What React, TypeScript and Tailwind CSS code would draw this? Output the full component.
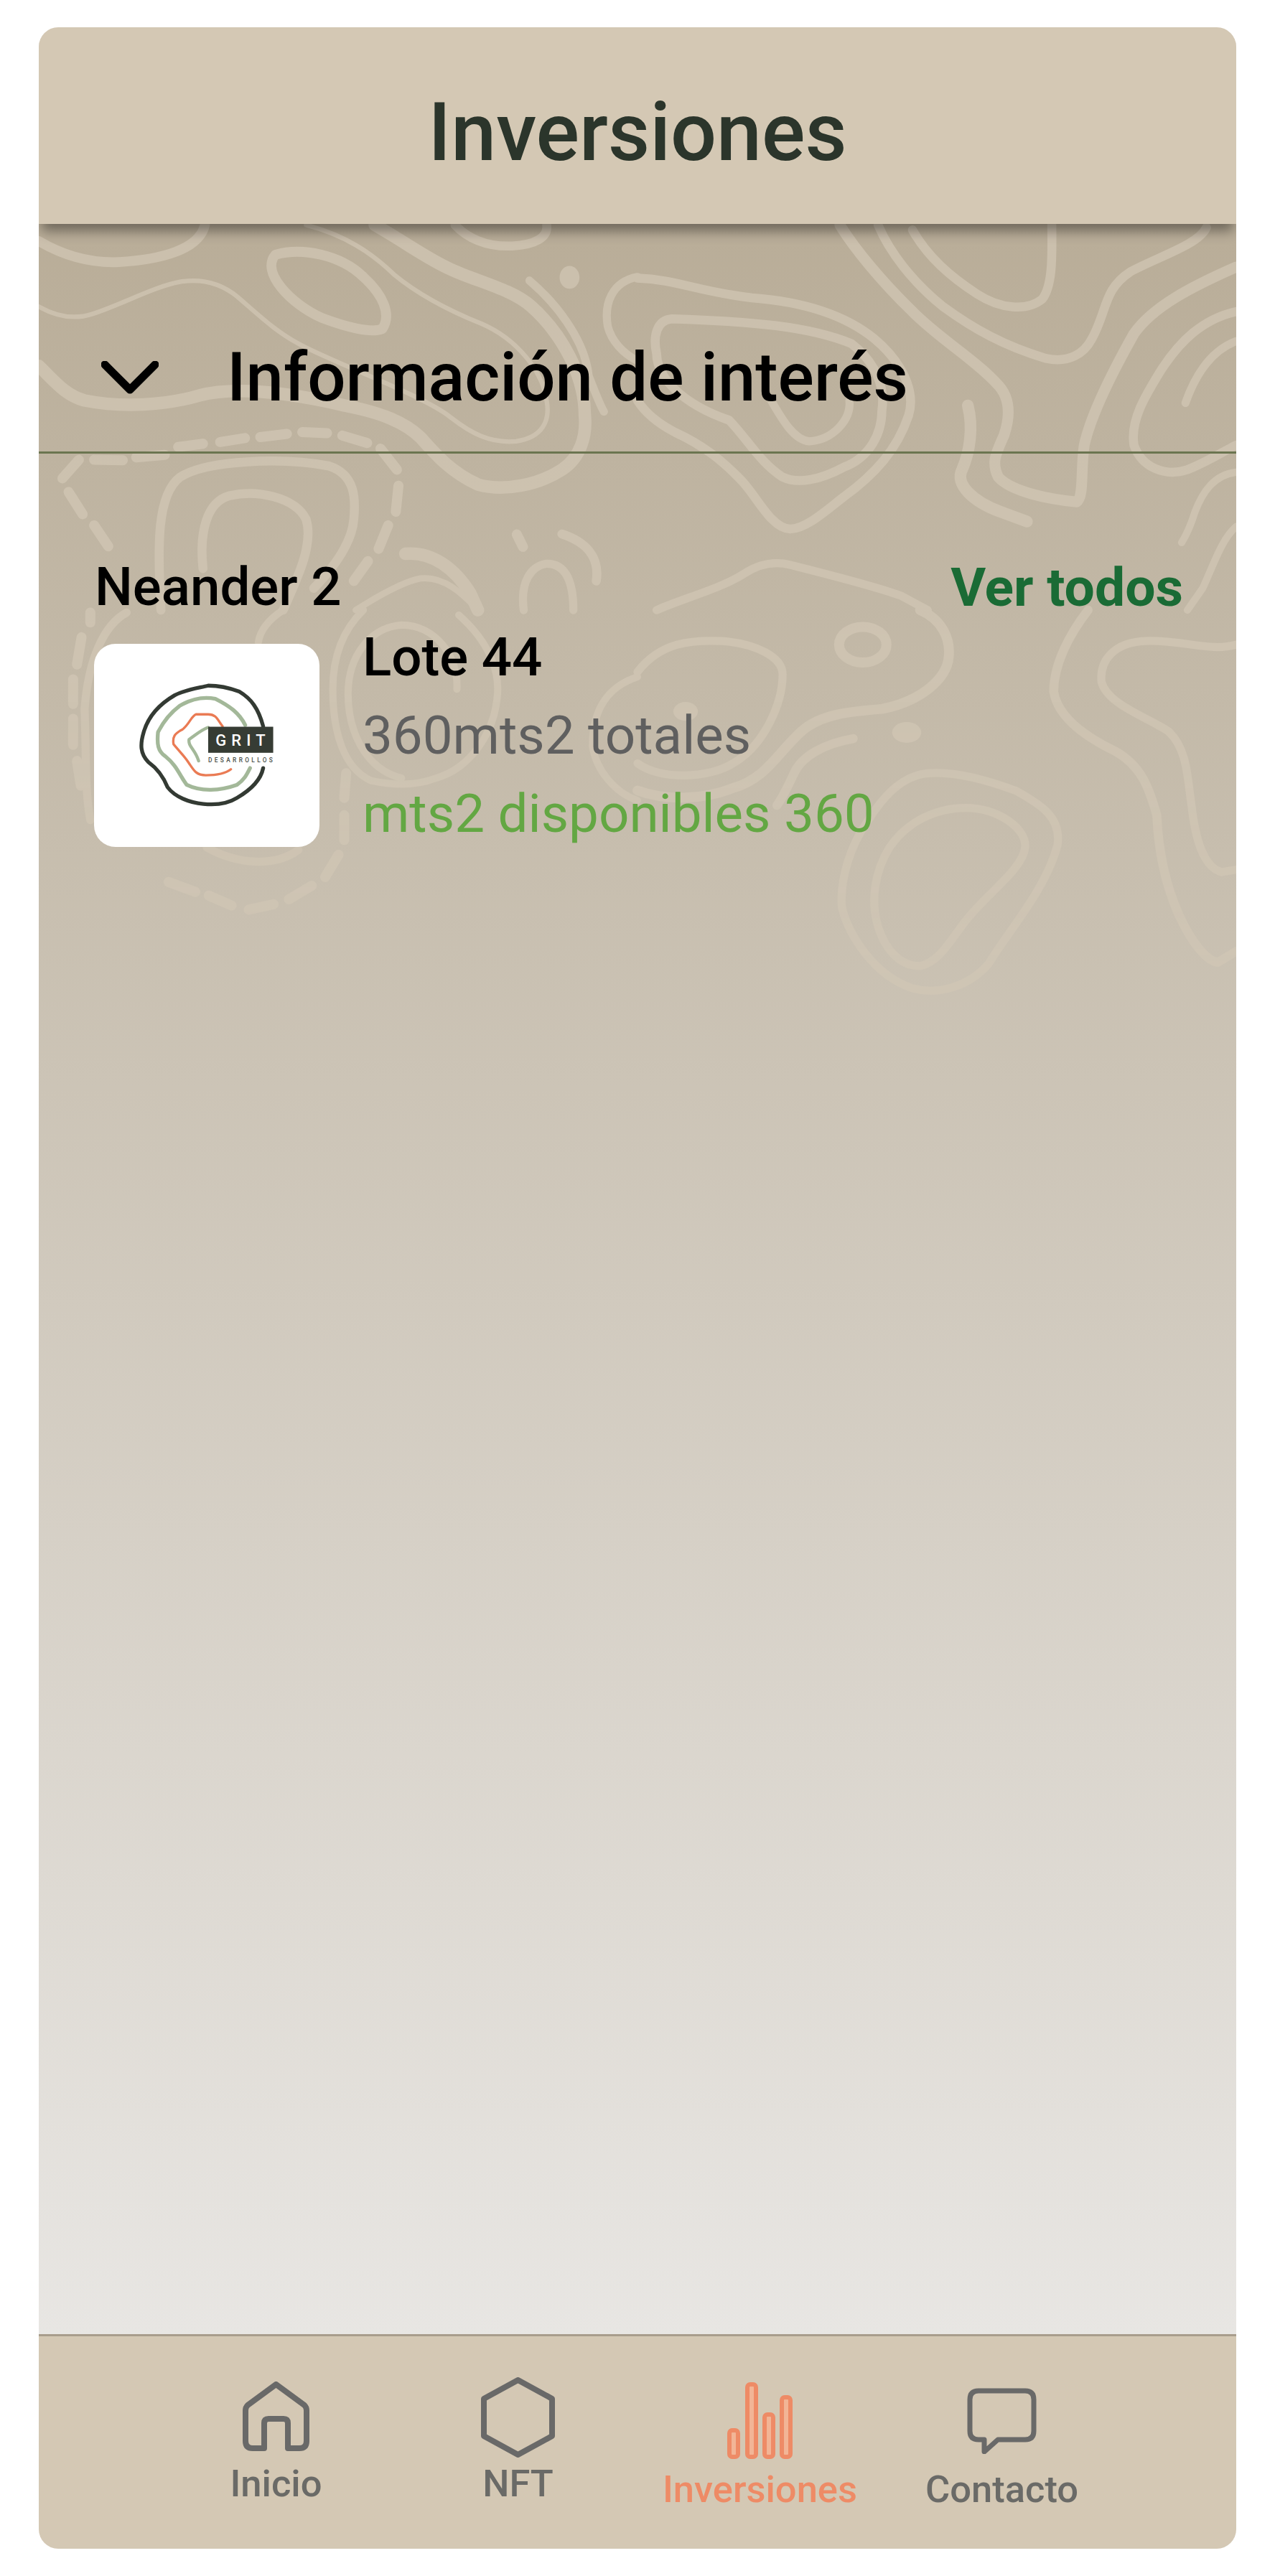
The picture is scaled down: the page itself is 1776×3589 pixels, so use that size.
const topLeft = [
  { d: "M0,75 C60,130 130,165 210,160 C320,150 420,110 435,10", w: 11 },
  { d: "M0,340 C40,375 90,395 140,370 C220,330 300,260 370,240 C430,225 480,250 520,300 C580,380 620,440 680,490 C760,560 1010,700 1080,790 C1130,850 1180,895 1250,885 C1320,870 1340,800 1330,720 C1320,600 1250,470 1160,410 C1080,360 1000,300 930,210 C870,120 800,50 700,10", w: 5 },
  { d: "M620,130 C690,100 790,130 850,220 C900,290 925,370 900,430 C870,450 800,420 740,385 C660,330 580,200 620,130 Z", w: 11 },
  { d: "M880,10 C960,80 1020,150 1080,190 C1150,240 1240,270 1290,340 C1370,450 1430,620 1430,780 C1435,860 1420,950 1370,1000 C1310,1060 1220,1090 1150,1060 C1080,1010 1040,940 1000,870 C960,810 900,770 800,740 C660,690 520,660 420,700 C330,740 220,750 120,720 C70,700 40,640 0,580", w: 14 },
  { d: "M1090,10 C1120,60 1170,100 1240,95 C1300,90 1335,60 1330,10", w: 10 },
  { d: "M320,1568 C310,1300 310,1100 370,1030 C440,960 640,950 760,985 C830,1020 830,1120 825,1200 C820,1300 770,1400 720,1480", w: 10 },
  { d: "M430,1400 C420,1250 440,1130 500,1105 C570,1080 670,1110 700,1200 C720,1300 680,1430 640,1568", w: 10 },
  { d: "M960,1340 C1030,1330 1090,1400 1130,1500 L1150,1568", w: 14 },
  { d: "M830,1568 C900,1500 960,1450 1000,1440 C1060,1430 1110,1500 1150,1568", w: 7 },
  { d: "M1370,1260 C1430,1290 1470,1350 1460,1450", w: 10 },
  { d: "M1270,1568 C1260,1450 1290,1390 1330,1380 C1380,1380 1400,1450 1400,1568", w: 9 },
  { d: "M1285,235 C1350,320 1430,470 1440,620 C1460,700 1470,740 1480,765", w: 9 },
  { d: "M1568,220 C1500,240 1480,330 1490,420 C1500,480 1530,530 1568,560", w: 9 },
];

const topRight = [
  { d: "M0,225 C100,230 160,280 300,305 C430,320 540,370 620,470 C690,560 730,680 710,780 C680,920 620,1020 540,1110 C490,1170 440,1240 400,1240 C350,1240 310,1100 270,1040 C220,960 170,900 100,850 C50,810 20,770 0,720", w: 10 },
  { d: "M640,760 C650,660 620,560 560,490 C450,420 300,400 90,390 C50,395 40,460 50,530 C50,620 110,730 240,800 C290,880 320,970 380,1030 C420,1060 480,1040 540,990 C610,950 640,850 640,760", w: 10 },
  { d: "M350,720 C380,800 410,880 450,885 C510,880 560,800 555,720", w: 9 },
  { d: "M530,10 C570,110 640,240 720,360 C790,470 880,550 940,650 C980,710 975,790 960,860 C940,930 925,970 945,1030 C980,1090 1080,1120 1150,1130 C1170,1110 1160,1000 1170,900 C1190,760 1260,560 1300,450 C1350,340 1450,260 1568,180", w: 12 },
  { d: "M630,10 C660,120 720,240 800,340 C880,430 960,500 1070,550 C1130,570 1170,530 1190,470 C1230,360 1220,270 1290,200 C1360,140 1470,90 1490,20", w: 10 },
  { d: "M720,30 C760,140 820,220 890,290 C950,350 1020,360 1060,310 C1090,250 1085,110 1085,10", w: 10 },
  { d: "M865,740 C880,830 870,930 850,1000 C830,1060 880,1130 950,1170 L1020,1210", w: 13 },
  { d: "M1568,360 C1480,390 1420,480 1370,600 C1330,700 1290,800 1300,900 C1320,990 1380,1030 1440,1000 C1490,970 1530,930 1568,900", w: 10 },
  { d: "M1435,730 C1460,620 1500,520 1568,480", w: 9 },
  { d: "M1568,1010 C1510,1020 1480,1090 1460,1170 C1450,1220 1435,1270 1425,1295", w: 8 },
  { d: "M1568,1230 C1530,1280 1510,1380 1480,1480 L1440,1568", w: 8 },
  { d: "M50,1568 C120,1520 220,1480 280,1420 C320,1380 360,1370 400,1385 C490,1420 620,1470 690,1510 L760,1568", w: 9 },
];

const bottomLeft = [
  { d: "M230,10 C170,60 130,200 120,400 C125,600 120,720 135,850", w: 9 },
  { d: "M440,960 C520,1030 620,1040 680,970", w: 9 },
  { d: "M950,680 C850,640 810,480 810,340 C810,180 870,70 950,60 C1040,60 1100,190 1095,320", w: 8 },
  { d: "M1100,20 C1180,130 1210,250 1200,360 C1190,500 1130,640 1040,680 C990,710 930,710 870,690 C800,640 770,500 770,320 C770,160 810,60 850,0", w: 8 },
  { d: "M640,0 C600,40 580,80 575,130", w: 8 },
  { d: "M1568,270 C1490,310 1450,400 1450,550 C1460,650 1510,740 1568,770", w: 8 },
];

const bottomRight = [
  { d: "M0,250 C60,130 140,120 220,125 C310,135 380,190 380,260 C380,380 330,550 250,620 C190,680 60,690 0,620", w: 9 },
  { d: "M740,0 C800,40 820,120 815,190 C810,280 740,370 640,400 C560,410 480,420 430,490 C370,570 340,680 250,720 C170,770 70,770 0,730", w: 11 },
  { d: "M565,520 C490,540 430,590 410,660 C395,710 380,760 365,790", w: 10 },
  { d: "M760,660 C690,670 640,760 600,860 C560,950 530,1080 535,1200 C550,1310 620,1480 720,1530 C790,1560 870,1520 920,1430 C970,1300 1070,1130 1100,950 C1110,840 1060,790 990,730 C920,690 830,650 760,660 Z", w: 9 },
  { d: "M860,800 C770,800 700,870 660,960 C620,1060 610,1180 630,1280 C650,1380 690,1440 740,1440 C800,1420 830,1300 880,1220 C930,1130 1010,1040 1015,960 C1020,880 940,800 860,800 Z", w: 9 },
  { d: "M1180,0 C1130,100 1090,220 1090,330 C1100,430 1170,510 1250,570 C1320,630 1340,720 1360,830 C1365,1000 1390,1140 1420,1240 C1450,1340 1490,1420 1520,1425 L1568,1380", w: 10 },
  { d: "M1568,140 C1500,170 1430,120 1330,125 C1250,130 1210,200 1215,290 C1230,380 1330,430 1390,490 C1440,560 1440,680 1450,780 C1460,920 1480,1040 1530,1060 L1568,1050", w: 9 },
];

// dashed ring around the logo, short strokes
const dashesTop = [
  "M145,960 L220,962", "M255,950 L330,940", "M365,908 L430,895", "M475,888 L540,872", "M580,868 L650,855",
  "M690,848 L755,852", "M795,862 L860,892", "M895,915 L938,1000", "M62,1035 L105,960", "M78,1090 L115,1180",
  "M145,1225 L182,1310", "M942,1065 L935,1170", "M915,1225 L890,1320", "M862,1370 L825,1450", "M1252,1262 L1268,1312",
];
const dashesBottom = [
  "M135,10 L135,50", "M112,110 L100,220", "M90,280 L90,380", "M90,440 L90,545", "M100,610 L110,710",
  "M340,1100 L410,1140", "M445,1155 L505,1195", "M550,1212 L615,1190", "M655,1170 L715,1115", "M750,1080 L785,990",
  "M800,930 L800,830", "M805,660 L800,760",
];

function Lines({ items }: { items: { d: string; w: number }[] }) {
  return (
    <>
      {items.map((l) => (
        <path key={l.d} d={l.d} strokeWidth={l.w * 1.25} vectorEffect="non-scaling-stroke" />
      ))}
    </>
  );
}

function Dashes({ items }: { items: string[] }) {
  return (
    <>
      {items.map((d) => (
        <path key={d} d={d} strokeWidth={14} vectorEffect="non-scaling-stroke" />
      ))}
    </>
  );
}

function Contours() {
  return (
    <svg
      className="absolute top-0 left-0 w-[1668px] h-[1100px] opacity-70 [mask-image:linear-gradient(to_bottom,black_50%,rgba(0,0,0,0.75)_100%)]"
      viewBox="54 312 1668 1100"
      fill="none"
      stroke="#d3c8b6"
      strokeLinecap="round"
      strokeLinejoin="round"
    >
      <g transform="translate(54 310) scale(0.5319 0.3444)">
        <Lines items={topLeft} />
        <Dashes items={dashesTop} />
        <ellipse cx="1390" cy="222" rx="26" ry="46" fill="#d3c8b6" stroke="none" />
      </g>
      <g transform="translate(888 310) scale(0.5319 0.3444)">
        <Lines items={topRight} />
      </g>
      <g transform="translate(54 850) scale(0.5319 0.3444)">
        <Lines items={bottomLeft} />
        <Dashes items={dashesBottom} />
      </g>
      <g transform="translate(888 850) scale(0.5319 0.3444)">
        <Lines items={bottomRight} />
        <ellipse cx="590" cy="140" rx="62" ry="72" strokeWidth={14} vectorEffect="non-scaling-stroke" />
        <ellipse cx="705" cy="495" rx="38" ry="42" fill="#d3c8b6" stroke="none" />
        <ellipse cx="126" cy="410" rx="32" ry="38" fill="#d3c8b6" stroke="none" />
      </g>
    </svg>
  );
}

function GritLogo() {
  return (
    <svg className="w-[314px] h-[283px]" viewBox="33 50 942 850" fill="none" strokeLinecap="round" strokeLinejoin="round">
      <path
        d="M740,395 C720,320 690,280 640,250 C600,235 560,225 510,225 C470,235 420,240 370,265 C310,300 260,350 240,420 C225,470 225,510 260,545 C295,570 320,600 340,650 C370,690 430,715 490,720 C540,725 590,720 630,695 C690,660 730,620 740,570"
        stroke="#333a33"
        strokeWidth="16"
      />
      <path
        d="M665,390 C640,340 600,310 540,280 C490,270 440,280 390,310 C350,340 320,380 300,420 C295,470 300,500 330,520 C380,560 390,600 420,640 C480,670 560,665 630,640 C660,620 670,600 685,570"
        stroke="#a3b899"
        strokeWidth="16"
      />
      <path
        d="M570,395 C550,370 545,345 510,345 H460 C440,350 430,390 400,410 C370,425 360,440 365,470 C390,500 410,520 430,550 C450,580 460,600 500,600 C540,600 580,595 605,575"
        stroke="#ea7b54"
        strokeWidth="10"
      />
      <path d="M510,400 C480,410 460,430 430,450 C425,480 455,490 470,540" stroke="#a3b899" strokeWidth="13" />
      <rect x="510" y="397" width="272" height="109" fill="#363c34" />
      <text x="541" y="476" fill="#ffffff" fontSize="66" fontWeight="500" textLength="208" fontFamily="Roboto, sans-serif">
        GRIT
      </text>
      <text x="510" y="547" fill="#4a4f49" fontSize="25" fontWeight="500" textLength="270" fontFamily="Roboto, sans-serif">
        DESARROLLOS
      </text>
    </svg>
  );
}

const navItems = [
  {
    label: "Inicio",
    wrap: "pt-[63px]",
    text: "mt-[19px] text-[#6a6a67]",
    icon: (
      <svg className="w-[93px] h-[97px]" viewBox="0 0 93 97" fill="none" stroke="#696968" strokeWidth="8" strokeLinejoin="round">
        <path d="M30,93 H14 Q4,93 4,83 V40 Q4,36 7,33 L46.5,4 L86,33 Q89,36 89,40 V83 Q89,93 79,93 H63 V58 Q63,52 57,52 H36 Q30,52 30,58 Z" />
      </svg>
    ),
  },
  {
    label: "NFT",
    wrap: "pt-[57px]",
    text: "mt-[10px] text-[#6a6a67]",
    icon: (
      <svg className="w-[103px] h-[112px]" viewBox="0 0 103 112" fill="none" stroke="#696968" strokeWidth="8" strokeLinejoin="round">
        <path d="M51.5,4 L99,30 V82 L51.5,108 L4,82 V30 Z" />
      </svg>
    ),
  },
  {
    label: "Inversiones",
    wrap: "pt-[64px]",
    text: "mt-[16px] text-[#ee8b66]",
    icon: (
      <svg className="w-[91px] h-[107px]" viewBox="0 0 91 107" fill="#f2b596" stroke="#ee8b66" strokeWidth="6">
        <rect x="3" y="67" width="12" height="37" rx="4" />
        <rect x="28" y="3" width="12" height="101" rx="4" />
        <rect x="52" y="45" width="12" height="59" rx="4" />
        <rect x="76" y="21" width="12" height="83" rx="4" />
      </svg>
    ),
  },
  {
    label: "Contacto",
    wrap: "pt-[72px]",
    text: "mt-[23px] text-[#6a6a67]",
    icon: (
      <svg className="w-[97px] h-[92px]" viewBox="0 0 97 92" fill="none" stroke="#696968" strokeWidth="7" strokeLinejoin="round">
        <path d="M24,72 H16 Q4,72 4,60 V16 Q4,4 16,4 H81 Q93,4 93,16 V60 Q93,72 81,72 H43 L24,89 Z" />
      </svg>
    ),
  },
];

export default function App() {
  return (
    <div className="bg-white pt-[38px] px-[54px] pb-[38px] font-[Roboto,sans-serif]">
      <div className="flex flex-col h-[3513px] rounded-[27px] overflow-hidden">
        <header className="relative z-10 flex items-center justify-center h-[274px] pt-[18px] bg-[#d4c8b4] shadow-[0_14px_16px_-4px_rgba(0,0,0,0.4)]">
          <h1 className="text-[113px] leading-none font-medium text-[#2b352b]">Inversiones</h1>
        </header>

        <main className="relative flex-1 overflow-hidden bg-gradient-to-b from-[#b9ad98] to-[#e8e6e3]">
          <Contours />
          <div className="relative">
            <div className="flex items-center h-[320px] pb-[56px] pt-[167px] pl-[87px] gap-[95px] border-b-[3px] border-[#6b7550]">
              <svg className="w-[80px] h-[46px]" viewBox="0 0 80 46" fill="none" stroke="#000000" strokeWidth="11" strokeLinecap="round" strokeLinejoin="round">
                <path d="M5,5 L40,40 L75,5" />
              </svg>
              <span className="text-[94px] leading-none font-medium text-black">Información de interés</span>
            </div>

            <section className="pt-[149px] pl-[78px] pr-[74px]">
              <div className="flex items-center justify-between">
                <span className="text-[74.5px] leading-none font-medium text-black">Neander 2</span>
                <span className="text-[75px] leading-none font-bold text-[#1a6b35]">Ver todos</span>
              </div>
              <div className="flex items-start gap-[60px] mt-[5px] -ml-[1px]">
                <div className="flex items-center justify-center w-[314px] h-[283px] mt-[36px] bg-white rounded-[30px]">
                  <GritLogo />
                </div>
                <div className="flex flex-col text-[74.5px] leading-[109px]">
                  <span className="font-medium text-black">Lote 44</span>
                  <span className="text-[#5f5f5f]">360mts2 totales</span>
                  <span className="text-[#63a743]">mts2 disponibles 360</span>
                </div>
              </div>
            </section>
          </div>
        </main>

        <nav className="flex justify-center h-[299px] border-t-[3px] border-[#a89d8c] bg-[#d4c8b4] pl-[4px]">
          {navItems.map((item) => (
            <div key={item.label} className={`flex flex-col items-center w-[337px] ${item.wrap}`}>
              {item.icon}
              <span className={`text-[52.5px] leading-none font-medium ${item.text}`}>{item.label}</span>
            </div>
          ))}
        </nav>
      </div>
    </div>
  );
}
